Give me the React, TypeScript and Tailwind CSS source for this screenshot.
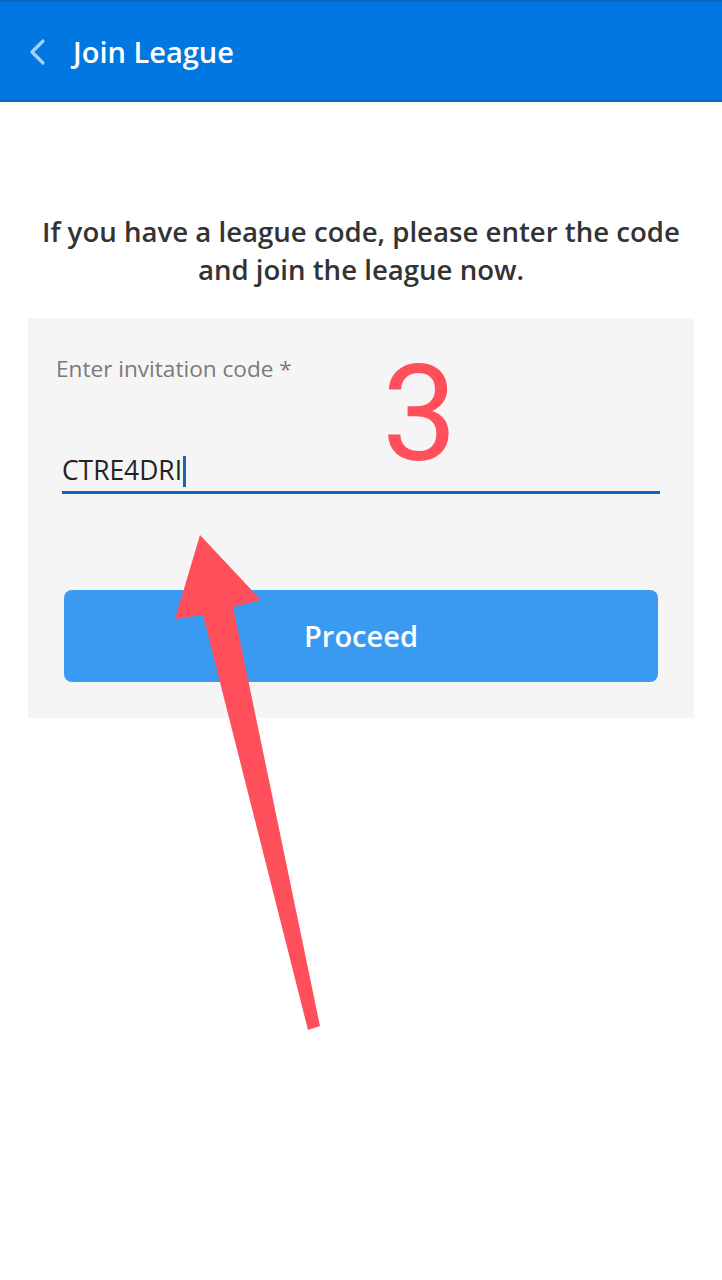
import React from "react";

const font = { fontFamily: '"Open Sans", "Noto Sans", sans-serif' };

// Header bar with back chevron
const Header: React.FC = () => (
    <header className="h-[102px] bg-[#0177e1] border-t-2 border-t-[#0a66c2] border-b-[3px] border-b-[#0a68c6] flex items-center">
        <svg width="20" height="28" viewBox="0 0 20 28" className="ml-[27px] mt-[2px]" fill="none">
            <path d="M16 3 L5 14 L16 25" stroke="#a8cff6" strokeWidth="3.2" strokeLinecap="round" strokeLinejoin="round" />
        </svg>
        <h1 className="ml-[26px] mt-[3px] text-[29px] font-semibold text-white">Join League</h1>
    </header>
);

export default function App() {
    return (
        <div className="relative w-[722px] min-h-[1280px] bg-white overflow-hidden" style={font}>
            <Header />

            {/* Intro */}
            <p className="mt-[110px] px-[36px] text-center text-[27.6px] leading-[38px] font-semibold text-[#333333]">
                If you have a league code, please enter the code and join the league now.
            </p>

            {/* Form panel */}
            <div className="mt-[30px] mx-[28px] bg-[#f5f5f5] pt-[37px] pb-[36px]">
                <div className="pl-[28px] text-[22.6px] leading-[28px] text-[#7a7a7a]">Enter invitation code *</div>
                <div className="mt-[68px] mx-[34px] h-[43px] flex items-center border-b-[3px] border-[#1565c0]">
                    <span className="text-[26.4px] font-medium text-[#222222]">CTRE4DRI</span>
                    <span className="ml-[1px] w-[3px] h-[31px] bg-[#1565c0]" />
                </div>
                <button className="mt-[96px] mx-[36px] w-[594px] h-[92px] rounded-[8px] bg-[#3a9af2] text-white text-[29px] font-semibold">
                    Proceed
                </button>
            </div>

            {/* Annotation: step number */}
            <div
                className="absolute left-[382px] top-[348px] text-[134px] leading-none text-[#ff4f5a]"
                style={{ fontFamily: 'Roboto, "Noto Sans", sans-serif', fontWeight: 400 }}
            >
                3
            </div>

            {/* Annotation: arrow */}
            <svg className="absolute left-0 top-0 pointer-events-none" width="722" height="1280" viewBox="0 0 722 1280">
                <polygon
                    points="200,535 261,600 233,607 320,1026 308,1030 203,615 175,619"
                    fill="#ff4f5a"
                    strokeLinejoin="round"
                />
            </svg>
        </div>
    );
}
